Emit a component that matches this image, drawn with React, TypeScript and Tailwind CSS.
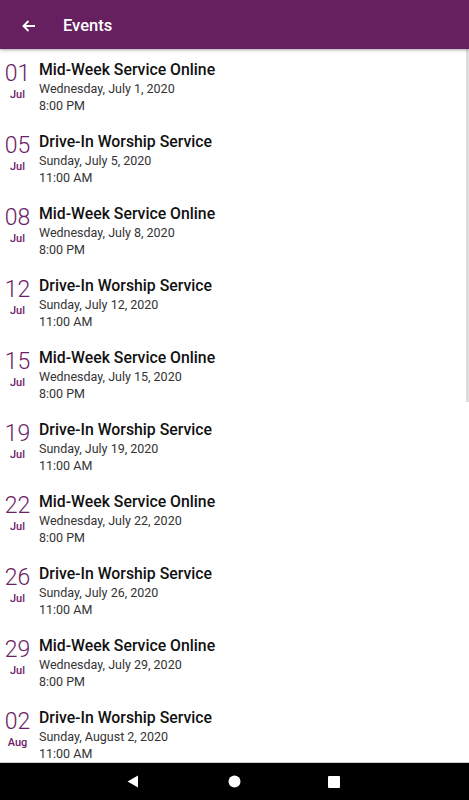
import React from "react";

const events = [
  { d: "01", m: "Jul", t: "Mid-Week Service Online", date: "Wednesday, July 1, 2020", time: "8:00 PM" },
  { d: "05", m: "Jul", t: "Drive-In Worship Service", date: "Sunday, July 5, 2020", time: "11:00 AM" },
  { d: "08", m: "Jul", t: "Mid-Week Service Online", date: "Wednesday, July 8, 2020", time: "8:00 PM" },
  { d: "12", m: "Jul", t: "Drive-In Worship Service", date: "Sunday, July 12, 2020", time: "11:00 AM" },
  { d: "15", m: "Jul", t: "Mid-Week Service Online", date: "Wednesday, July 15, 2020", time: "8:00 PM" },
  { d: "19", m: "Jul", t: "Drive-In Worship Service", date: "Sunday, July 19, 2020", time: "11:00 AM" },
  { d: "22", m: "Jul", t: "Mid-Week Service Online", date: "Wednesday, July 22, 2020", time: "8:00 PM" },
  { d: "26", m: "Jul", t: "Drive-In Worship Service", date: "Sunday, July 26, 2020", time: "11:00 AM" },
  { d: "29", m: "Jul", t: "Mid-Week Service Online", date: "Wednesday, July 29, 2020", time: "8:00 PM" },
  { d: "02", m: "Aug", t: "Drive-In Worship Service", date: "Sunday, August 2, 2020", time: "11:00 AM" },
];

export default function App() {
  return (
    <div className="w-[469px] h-[800px] flex flex-col bg-white overflow-hidden" style={{ fontFamily: "Roboto, 'Noto Sans', sans-serif" }}>
      <div className="h-[49px] shrink-0 bg-[#66205f] flex items-center pt-[3px] shadow-[0_1px_3px_rgba(0,0,0,0.35)] z-10 relative">
        <svg width="14" height="12" viewBox="0 0 14 12" className="ml-[22px]">
          <path d="M13 6H1.5M6.5 1L1.5 6l5 5" stroke="white" strokeWidth="1.9" fill="none" />
        </svg>
        <span className="ml-[27px] text-white text-[16.5px] font-medium">Events</span>
      </div>
      <div className="flex-1 flex relative overflow-hidden">
        <div className="flex-1 flex flex-col">
          {events.map((e, i) => (
            <div key={i} className="h-[72px] shrink-0 flex pt-[10px]">
              <div className="w-[39px] shrink-0 flex flex-col items-center pr-[4px]">
                <div className="text-[23px] font-light leading-[28px] text-[#6b2166] mt-[1px]">{e.d}</div>
                <div className="text-[11px] font-medium leading-[14px] text-[#6b2166]">{e.m}</div>
              </div>
              <div className="flex flex-col">
                <div className="text-[15.8px] font-medium leading-[21px] text-[#111]">{e.t}</div>
                <div className="text-[12.5px] leading-[17px] text-[#333]">{e.date}</div>
                <div className="text-[12.5px] leading-[17px] text-[#333]">{e.time}</div>
              </div>
            </div>
          ))}
        </div>
        <div className="absolute right-0 top-0 w-[3px] h-[353px] bg-[#dcdcdc]" />
      </div>
      <div className="h-[1px] bg-[#d0d0d0] shrink-0" />
      <div className="h-[37px] shrink-0 bg-black flex items-center justify-center pr-[2px]">
        <div className="flex items-center">
          <svg width="12" height="13" viewBox="0 0 12 13" className="mr-[89px]"><path d="M11 0.5V12.5L0.5 6.5Z" fill="white" /></svg>
          <svg width="13" height="13" viewBox="0 0 13 13" className="mr-[87px]"><circle cx="6.5" cy="6.5" r="6" fill="white" /></svg>
          <svg width="12" height="12" viewBox="0 0 12 12"><rect x="0" y="0" width="12" height="12" rx="1" fill="white" /></svg>
        </div>
      </div>
    </div>
  );
}
